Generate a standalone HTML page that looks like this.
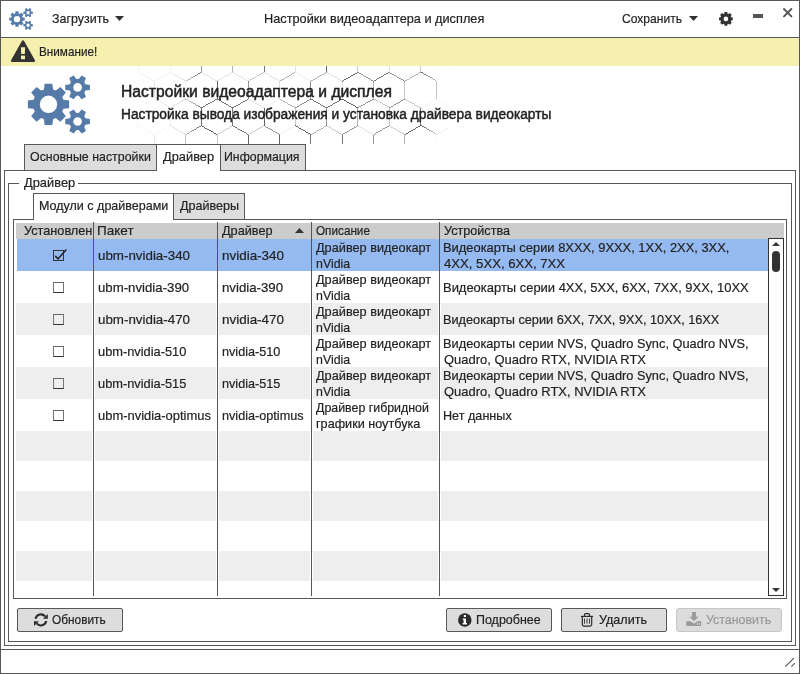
<!DOCTYPE html>
<html lang="ru"><head><meta charset="utf-8"><title>Настройки видеоадаптера и дисплея</title>
<style>
html,body{margin:0;padding:0;background:#fff;}
body{width:800px;height:674px;position:relative;overflow:hidden;font-family:"Liberation Sans", sans-serif;color:#222;}
.b{position:absolute;box-sizing:border-box;}
.t{position:absolute;white-space:nowrap;transform-origin:0 0;}
.ln{position:absolute;background:#585858;}
svg{position:absolute;overflow:visible;}
</style></head><body>
<div class="b" style="left:0;top:0;width:800px;height:674px;border:1px solid #585858;background:#fff"></div>
<div class="ln" style="left:1px;top:37px;width:798px;height:1px"></div>
<div class="b" style="left:1px;top:38px;width:798px;height:28px;background:#f5f0ae"></div>
<svg style="position:absolute;left:126px;top:66px" width="328" height="78" viewBox="0 0 328 78">
<defs><linearGradient id="hg" x1="0" x2="1" y1="0" y2="0">
<stop offset="0" stop-color="#fff" stop-opacity="0"/><stop offset="0.06" stop-color="#fff" stop-opacity="0.1"/><stop offset="0.17" stop-color="#fff" stop-opacity="0.22"/><stop offset="0.235" stop-color="#fff" stop-opacity="0.9"/>
<stop offset="0.9" stop-color="#fff" stop-opacity="0.9"/><stop offset="0.95" stop-color="#fff" stop-opacity="0.3"/><stop offset="1" stop-color="#fff" stop-opacity="0"/></linearGradient>
<mask id="hm"><rect x="0" y="0" width="328" height="78" fill="url(#hg)"/></mask></defs>
<g mask="url(#hm)" stroke="#1a1a1a" stroke-width="0.75" shape-rendering="crispEdges" fill="none">
<line x1="-112.4" y1="-47.1" x2="-96.8" y2="-38.2" stroke-opacity="0.7"/><line x1="-112.4" y1="-47.1" x2="-128.1" y2="-38.2" stroke-opacity="0.9"/><line x1="-96.8" y1="-38.2" x2="-96.8" y2="-20.4" stroke-opacity="0.5"/><line x1="-81.1" y1="-47.1" x2="-65.4" y2="-38.2" stroke-opacity="0.2"/><line x1="-81.1" y1="-47.1" x2="-96.8" y2="-38.2" stroke-opacity="1"/><line x1="-65.4" y1="-38.2" x2="-65.4" y2="-20.4" stroke-opacity="1"/><line x1="-49.8" y1="-47.1" x2="-34.2" y2="-38.2" stroke-opacity="0.1"/><line x1="-49.8" y1="-47.1" x2="-65.5" y2="-38.2" stroke-opacity="0.35"/><line x1="-34.2" y1="-38.2" x2="-34.2" y2="-20.4" stroke-opacity="1"/><line x1="-18.5" y1="-47.1" x2="-2.8" y2="-38.2" stroke-opacity="0.7"/><line x1="-18.5" y1="-47.1" x2="-34.2" y2="-38.2" stroke-opacity="0.35"/><line x1="-2.8" y1="-38.2" x2="-2.8" y2="-20.4" stroke-opacity="1"/><line x1="12.8" y1="-47.1" x2="28.5" y2="-38.2" stroke-opacity="0.35"/><line x1="12.8" y1="-47.1" x2="-2.8" y2="-38.2" stroke-opacity="0.9"/><line x1="28.5" y1="-38.2" x2="28.5" y2="-20.4" stroke-opacity="1"/><line x1="44.1" y1="-47.1" x2="59.8" y2="-38.2" stroke-opacity="1"/><line x1="44.1" y1="-47.1" x2="28.4" y2="-38.2" stroke-opacity="0.5"/><line x1="59.8" y1="-38.2" x2="59.8" y2="-20.4" stroke-opacity="0.5"/><line x1="75.4" y1="-47.1" x2="91.1" y2="-38.2" stroke-opacity="1"/><line x1="75.4" y1="-47.1" x2="59.8" y2="-38.2" stroke-opacity="0.9"/><line x1="91.1" y1="-38.2" x2="91.1" y2="-20.4" stroke-opacity="1"/><line x1="106.7" y1="-47.1" x2="122.3" y2="-38.2" stroke-opacity="0.35"/><line x1="106.7" y1="-47.1" x2="91.0" y2="-38.2" stroke-opacity="0.5"/><line x1="122.3" y1="-38.2" x2="122.3" y2="-20.4" stroke-opacity="1"/><line x1="138.0" y1="-47.1" x2="153.6" y2="-38.2" stroke-opacity="0.1"/><line x1="138.0" y1="-47.1" x2="122.3" y2="-38.2" stroke-opacity="0.35"/><line x1="153.6" y1="-38.2" x2="153.6" y2="-20.4" stroke-opacity="1"/><line x1="169.3" y1="-47.1" x2="184.9" y2="-38.2" stroke-opacity="0.9"/><line x1="169.3" y1="-47.1" x2="153.7" y2="-38.2" stroke-opacity="0.2"/><line x1="184.9" y1="-38.2" x2="184.9" y2="-20.4" stroke-opacity="0.2"/><line x1="200.6" y1="-47.1" x2="216.2" y2="-38.2" stroke-opacity="0.35"/><line x1="200.6" y1="-47.1" x2="185.0" y2="-38.2" stroke-opacity="1"/><line x1="216.2" y1="-38.2" x2="216.2" y2="-20.4" stroke-opacity="0.35"/><line x1="231.9" y1="-47.1" x2="247.5" y2="-38.2" stroke-opacity="0.35"/><line x1="231.9" y1="-47.1" x2="216.2" y2="-38.2" stroke-opacity="0.5"/><line x1="247.5" y1="-38.2" x2="247.5" y2="-20.4" stroke-opacity="1"/><line x1="263.2" y1="-47.1" x2="278.8" y2="-38.2" stroke-opacity="0.9"/><line x1="263.2" y1="-47.1" x2="247.6" y2="-38.2" stroke-opacity="1"/><line x1="278.8" y1="-38.2" x2="278.8" y2="-20.4" stroke-opacity="0.35"/><line x1="294.5" y1="-47.1" x2="310.1" y2="-38.2" stroke-opacity="0.1"/><line x1="294.5" y1="-47.1" x2="278.9" y2="-38.2" stroke-opacity="0.9"/><line x1="310.1" y1="-38.2" x2="310.1" y2="-20.4" stroke-opacity="0.7"/><line x1="325.8" y1="-47.1" x2="341.4" y2="-38.2" stroke-opacity="0.5"/><line x1="325.8" y1="-47.1" x2="310.2" y2="-38.2" stroke-opacity="0.9"/><line x1="341.4" y1="-38.2" x2="341.4" y2="-20.4" stroke-opacity="0.35"/><line x1="357.1" y1="-47.1" x2="372.8" y2="-38.2" stroke-opacity="1"/><line x1="357.1" y1="-47.1" x2="341.5" y2="-38.2" stroke-opacity="0.35"/><line x1="372.8" y1="-38.2" x2="372.8" y2="-20.4" stroke-opacity="0.7"/><line x1="388.4" y1="-47.1" x2="404.0" y2="-38.2" stroke-opacity="0.35"/><line x1="388.4" y1="-47.1" x2="372.8" y2="-38.2" stroke-opacity="0.1"/><line x1="404.0" y1="-38.2" x2="404.0" y2="-20.4" stroke-opacity="0.2"/><line x1="419.7" y1="-47.1" x2="435.4" y2="-38.2" stroke-opacity="0.9"/><line x1="419.7" y1="-47.1" x2="404.1" y2="-38.2" stroke-opacity="1"/><line x1="435.4" y1="-38.2" x2="435.4" y2="-20.4" stroke-opacity="0.35"/><line x1="-96.8" y1="-20.4" x2="-81.1" y2="-11.5" stroke-opacity="0.35"/><line x1="-96.8" y1="-20.4" x2="-112.4" y2="-11.5" stroke-opacity="0.2"/><line x1="-81.1" y1="-11.5" x2="-81.1" y2="6.3" stroke-opacity="0.9"/><line x1="-65.4" y1="-20.4" x2="-49.8" y2="-11.5" stroke-opacity="0.7"/><line x1="-65.4" y1="-20.4" x2="-81.1" y2="-11.5" stroke-opacity="1"/><line x1="-49.8" y1="-11.5" x2="-49.8" y2="6.3" stroke-opacity="0.35"/><line x1="-34.2" y1="-20.4" x2="-18.5" y2="-11.5" stroke-opacity="0.2"/><line x1="-34.2" y1="-20.4" x2="-49.8" y2="-11.5" stroke-opacity="1"/><line x1="-18.5" y1="-11.5" x2="-18.5" y2="6.3" stroke-opacity="0.35"/><line x1="-2.8" y1="-20.4" x2="12.8" y2="-11.5" stroke-opacity="1"/><line x1="-2.8" y1="-20.4" x2="-18.5" y2="-11.5" stroke-opacity="0.35"/><line x1="12.8" y1="-11.5" x2="12.8" y2="6.3" stroke-opacity="0.9"/><line x1="28.5" y1="-20.4" x2="44.1" y2="-11.5" stroke-opacity="0.5"/><line x1="28.5" y1="-20.4" x2="12.8" y2="-11.5" stroke-opacity="0.2"/><line x1="44.1" y1="-11.5" x2="44.1" y2="6.3" stroke-opacity="0.35"/><line x1="59.8" y1="-20.4" x2="75.4" y2="-11.5" stroke-opacity="0.5"/><line x1="59.8" y1="-20.4" x2="44.1" y2="-11.5" stroke-opacity="0.1"/><line x1="75.4" y1="-11.5" x2="75.4" y2="6.3" stroke-opacity="0.7"/><line x1="91.1" y1="-20.4" x2="106.7" y2="-11.5" stroke-opacity="0.5"/><line x1="91.1" y1="-20.4" x2="75.4" y2="-11.5" stroke-opacity="0.35"/><line x1="106.7" y1="-11.5" x2="106.7" y2="6.3" stroke-opacity="0.5"/><line x1="122.3" y1="-20.4" x2="138.0" y2="-11.5" stroke-opacity="0.7"/><line x1="122.3" y1="-20.4" x2="106.7" y2="-11.5" stroke-opacity="0.7"/><line x1="138.0" y1="-11.5" x2="138.0" y2="6.3" stroke-opacity="0.9"/><line x1="153.6" y1="-20.4" x2="169.3" y2="-11.5" stroke-opacity="0.1"/><line x1="153.6" y1="-20.4" x2="138.0" y2="-11.5" stroke-opacity="0.9"/><line x1="169.3" y1="-11.5" x2="169.3" y2="6.3" stroke-opacity="0.2"/><line x1="184.9" y1="-20.4" x2="200.6" y2="-11.5" stroke-opacity="0.1"/><line x1="184.9" y1="-20.4" x2="169.3" y2="-11.5" stroke-opacity="0.9"/><line x1="200.6" y1="-11.5" x2="200.6" y2="6.3" stroke-opacity="1"/><line x1="216.2" y1="-20.4" x2="231.9" y2="-11.5" stroke-opacity="0.35"/><line x1="216.2" y1="-20.4" x2="200.6" y2="-11.5" stroke-opacity="0.7"/><line x1="231.9" y1="-11.5" x2="231.9" y2="6.3" stroke-opacity="0.35"/><line x1="247.5" y1="-20.4" x2="263.2" y2="-11.5" stroke-opacity="0.5"/><line x1="247.5" y1="-20.4" x2="231.9" y2="-11.5" stroke-opacity="0.7"/><line x1="263.2" y1="-11.5" x2="263.2" y2="6.3" stroke-opacity="0.2"/><line x1="278.8" y1="-20.4" x2="294.5" y2="-11.5" stroke-opacity="0.5"/><line x1="278.8" y1="-20.4" x2="263.2" y2="-11.5" stroke-opacity="0.7"/><line x1="294.5" y1="-11.5" x2="294.5" y2="6.3" stroke-opacity="0.35"/><line x1="310.1" y1="-20.4" x2="325.8" y2="-11.5" stroke-opacity="1"/><line x1="310.1" y1="-20.4" x2="294.5" y2="-11.5" stroke-opacity="1"/><line x1="325.8" y1="-11.5" x2="325.8" y2="6.3" stroke-opacity="0.35"/><line x1="341.4" y1="-20.4" x2="357.1" y2="-11.5" stroke-opacity="0.5"/><line x1="341.4" y1="-20.4" x2="325.8" y2="-11.5" stroke-opacity="0.9"/><line x1="357.1" y1="-11.5" x2="357.1" y2="6.3" stroke-opacity="0.1"/><line x1="372.8" y1="-20.4" x2="388.4" y2="-11.5" stroke-opacity="0.7"/><line x1="372.8" y1="-20.4" x2="357.1" y2="-11.5" stroke-opacity="0.9"/><line x1="388.4" y1="-11.5" x2="388.4" y2="6.3" stroke-opacity="0.5"/><line x1="404.0" y1="-20.4" x2="419.7" y2="-11.5" stroke-opacity="0.5"/><line x1="404.0" y1="-20.4" x2="388.4" y2="-11.5" stroke-opacity="1"/><line x1="419.7" y1="-11.5" x2="419.7" y2="6.3" stroke-opacity="0.2"/><line x1="435.4" y1="-20.4" x2="451.0" y2="-11.5" stroke-opacity="1"/><line x1="435.4" y1="-20.4" x2="419.7" y2="-11.5" stroke-opacity="0.1"/><line x1="451.0" y1="-11.5" x2="451.0" y2="6.3" stroke-opacity="0.35"/><line x1="-112.4" y1="6.3" x2="-96.8" y2="15.2" stroke-opacity="0.35"/><line x1="-112.4" y1="6.3" x2="-128.1" y2="15.2" stroke-opacity="0.1"/><line x1="-96.8" y1="15.2" x2="-96.8" y2="33.0" stroke-opacity="0.1"/><line x1="-81.1" y1="6.3" x2="-65.4" y2="15.2" stroke-opacity="0.7"/><line x1="-81.1" y1="6.3" x2="-96.8" y2="15.2" stroke-opacity="0.7"/><line x1="-65.4" y1="15.2" x2="-65.4" y2="33.0" stroke-opacity="0.2"/><line x1="-49.8" y1="6.3" x2="-34.2" y2="15.2" stroke-opacity="0.7"/><line x1="-49.8" y1="6.3" x2="-65.5" y2="15.2" stroke-opacity="0.35"/><line x1="-34.2" y1="15.2" x2="-34.2" y2="33.0" stroke-opacity="0.5"/><line x1="-18.5" y1="6.3" x2="-2.8" y2="15.2" stroke-opacity="0.35"/><line x1="-18.5" y1="6.3" x2="-34.2" y2="15.2" stroke-opacity="0.1"/><line x1="-2.8" y1="15.2" x2="-2.8" y2="33.0" stroke-opacity="0.5"/><line x1="12.8" y1="6.3" x2="28.5" y2="15.2" stroke-opacity="1"/><line x1="12.8" y1="6.3" x2="-2.8" y2="15.2" stroke-opacity="0.1"/><line x1="28.5" y1="15.2" x2="28.5" y2="33.0" stroke-opacity="1"/><line x1="44.1" y1="6.3" x2="59.8" y2="15.2" stroke-opacity="0.7"/><line x1="44.1" y1="6.3" x2="28.4" y2="15.2" stroke-opacity="0.5"/><line x1="59.8" y1="15.2" x2="59.8" y2="33.0" stroke-opacity="0.2"/><line x1="75.4" y1="6.3" x2="91.1" y2="15.2" stroke-opacity="0.2"/><line x1="75.4" y1="6.3" x2="59.8" y2="15.2" stroke-opacity="1"/><line x1="91.1" y1="15.2" x2="91.1" y2="33.0" stroke-opacity="1"/><line x1="106.7" y1="6.3" x2="122.3" y2="15.2" stroke-opacity="0.2"/><line x1="106.7" y1="6.3" x2="91.0" y2="15.2" stroke-opacity="0.2"/><line x1="122.3" y1="15.2" x2="122.3" y2="33.0" stroke-opacity="0.7"/><line x1="138.0" y1="6.3" x2="153.6" y2="15.2" stroke-opacity="0.2"/><line x1="138.0" y1="6.3" x2="122.3" y2="15.2" stroke-opacity="0.35"/><line x1="153.6" y1="15.2" x2="153.6" y2="33.0" stroke-opacity="0.2"/><line x1="169.3" y1="6.3" x2="184.9" y2="15.2" stroke-opacity="0.1"/><line x1="169.3" y1="6.3" x2="153.7" y2="15.2" stroke-opacity="0.5"/><line x1="184.9" y1="15.2" x2="184.9" y2="33.0" stroke-opacity="0.7"/><line x1="200.6" y1="6.3" x2="216.2" y2="15.2" stroke-opacity="0.2"/><line x1="200.6" y1="6.3" x2="185.0" y2="15.2" stroke-opacity="0.5"/><line x1="216.2" y1="15.2" x2="216.2" y2="33.0" stroke-opacity="0.2"/><line x1="231.9" y1="6.3" x2="247.5" y2="15.2" stroke-opacity="0.7"/><line x1="231.9" y1="6.3" x2="216.2" y2="15.2" stroke-opacity="1"/><line x1="247.5" y1="15.2" x2="247.5" y2="33.0" stroke-opacity="0.5"/><line x1="263.2" y1="6.3" x2="278.8" y2="15.2" stroke-opacity="0.7"/><line x1="263.2" y1="6.3" x2="247.6" y2="15.2" stroke-opacity="0.9"/><line x1="278.8" y1="15.2" x2="278.8" y2="33.0" stroke-opacity="0.35"/><line x1="294.5" y1="6.3" x2="310.1" y2="15.2" stroke-opacity="1"/><line x1="294.5" y1="6.3" x2="278.9" y2="15.2" stroke-opacity="0.5"/><line x1="310.1" y1="15.2" x2="310.1" y2="33.0" stroke-opacity="1"/><line x1="325.8" y1="6.3" x2="341.4" y2="15.2" stroke-opacity="0.9"/><line x1="325.8" y1="6.3" x2="310.2" y2="15.2" stroke-opacity="0.1"/><line x1="341.4" y1="15.2" x2="341.4" y2="33.0" stroke-opacity="0.7"/><line x1="357.1" y1="6.3" x2="372.8" y2="15.2" stroke-opacity="0.9"/><line x1="357.1" y1="6.3" x2="341.5" y2="15.2" stroke-opacity="0.2"/><line x1="372.8" y1="15.2" x2="372.8" y2="33.0" stroke-opacity="0.9"/><line x1="388.4" y1="6.3" x2="404.0" y2="15.2" stroke-opacity="0.5"/><line x1="388.4" y1="6.3" x2="372.8" y2="15.2" stroke-opacity="0.5"/><line x1="404.0" y1="15.2" x2="404.0" y2="33.0" stroke-opacity="0.1"/><line x1="419.7" y1="6.3" x2="435.4" y2="15.2" stroke-opacity="0.5"/><line x1="419.7" y1="6.3" x2="404.1" y2="15.2" stroke-opacity="1"/><line x1="435.4" y1="15.2" x2="435.4" y2="33.0" stroke-opacity="0.9"/><line x1="-96.8" y1="33.0" x2="-81.1" y2="41.9" stroke-opacity="0.5"/><line x1="-96.8" y1="33.0" x2="-112.4" y2="41.9" stroke-opacity="0.5"/><line x1="-81.1" y1="41.9" x2="-81.1" y2="59.7" stroke-opacity="0.35"/><line x1="-65.4" y1="33.0" x2="-49.8" y2="41.9" stroke-opacity="0.7"/><line x1="-65.4" y1="33.0" x2="-81.1" y2="41.9" stroke-opacity="0.9"/><line x1="-49.8" y1="41.9" x2="-49.8" y2="59.7" stroke-opacity="0.1"/><line x1="-34.2" y1="33.0" x2="-18.5" y2="41.9" stroke-opacity="0.5"/><line x1="-34.2" y1="33.0" x2="-49.8" y2="41.9" stroke-opacity="0.1"/><line x1="-18.5" y1="41.9" x2="-18.5" y2="59.7" stroke-opacity="0.35"/><line x1="-2.8" y1="33.0" x2="12.8" y2="41.9" stroke-opacity="0.7"/><line x1="-2.8" y1="33.0" x2="-18.5" y2="41.9" stroke-opacity="0.2"/><line x1="12.8" y1="41.9" x2="12.8" y2="59.7" stroke-opacity="0.5"/><line x1="28.5" y1="33.0" x2="44.1" y2="41.9" stroke-opacity="0.7"/><line x1="28.5" y1="33.0" x2="12.8" y2="41.9" stroke-opacity="0.2"/><line x1="44.1" y1="41.9" x2="44.1" y2="59.7" stroke-opacity="0.5"/><line x1="59.8" y1="33.0" x2="75.4" y2="41.9" stroke-opacity="0.9"/><line x1="59.8" y1="33.0" x2="44.1" y2="41.9" stroke-opacity="0.9"/><line x1="75.4" y1="41.9" x2="75.4" y2="59.7" stroke-opacity="1"/><line x1="91.1" y1="33.0" x2="106.7" y2="41.9" stroke-opacity="0.9"/><line x1="91.1" y1="33.0" x2="75.4" y2="41.9" stroke-opacity="0.9"/><line x1="106.7" y1="41.9" x2="106.7" y2="59.7" stroke-opacity="0.9"/><line x1="122.3" y1="33.0" x2="138.0" y2="41.9" stroke-opacity="0.2"/><line x1="122.3" y1="33.0" x2="106.7" y2="41.9" stroke-opacity="0.9"/><line x1="138.0" y1="41.9" x2="138.0" y2="59.7" stroke-opacity="1"/><line x1="153.6" y1="33.0" x2="169.3" y2="41.9" stroke-opacity="0.5"/><line x1="153.6" y1="33.0" x2="138.0" y2="41.9" stroke-opacity="0.1"/><line x1="169.3" y1="41.9" x2="169.3" y2="59.7" stroke-opacity="0.35"/><line x1="184.9" y1="33.0" x2="200.6" y2="41.9" stroke-opacity="0.9"/><line x1="184.9" y1="33.0" x2="169.3" y2="41.9" stroke-opacity="0.7"/><line x1="200.6" y1="41.9" x2="200.6" y2="59.7" stroke-opacity="0.7"/><line x1="216.2" y1="33.0" x2="231.9" y2="41.9" stroke-opacity="1"/><line x1="216.2" y1="33.0" x2="200.6" y2="41.9" stroke-opacity="0.9"/><line x1="231.9" y1="41.9" x2="231.9" y2="59.7" stroke-opacity="0.5"/><line x1="247.5" y1="33.0" x2="263.2" y2="41.9" stroke-opacity="0.35"/><line x1="247.5" y1="33.0" x2="231.9" y2="41.9" stroke-opacity="0.7"/><line x1="263.2" y1="41.9" x2="263.2" y2="59.7" stroke-opacity="0.35"/><line x1="278.8" y1="33.0" x2="294.5" y2="41.9" stroke-opacity="0.35"/><line x1="278.8" y1="33.0" x2="263.2" y2="41.9" stroke-opacity="0.7"/><line x1="294.5" y1="41.9" x2="294.5" y2="59.7" stroke-opacity="0.9"/><line x1="310.1" y1="33.0" x2="325.8" y2="41.9" stroke-opacity="0.2"/><line x1="310.1" y1="33.0" x2="294.5" y2="41.9" stroke-opacity="0.1"/><line x1="325.8" y1="41.9" x2="325.8" y2="59.7" stroke-opacity="0.35"/><line x1="341.4" y1="33.0" x2="357.1" y2="41.9" stroke-opacity="0.35"/><line x1="341.4" y1="33.0" x2="325.8" y2="41.9" stroke-opacity="0.2"/><line x1="357.1" y1="41.9" x2="357.1" y2="59.7" stroke-opacity="0.2"/><line x1="372.8" y1="33.0" x2="388.4" y2="41.9" stroke-opacity="0.2"/><line x1="372.8" y1="33.0" x2="357.1" y2="41.9" stroke-opacity="1"/><line x1="388.4" y1="41.9" x2="388.4" y2="59.7" stroke-opacity="0.5"/><line x1="404.0" y1="33.0" x2="419.7" y2="41.9" stroke-opacity="0.1"/><line x1="404.0" y1="33.0" x2="388.4" y2="41.9" stroke-opacity="0.1"/><line x1="419.7" y1="41.9" x2="419.7" y2="59.7" stroke-opacity="0.1"/><line x1="435.4" y1="33.0" x2="451.0" y2="41.9" stroke-opacity="0.2"/><line x1="435.4" y1="33.0" x2="419.7" y2="41.9" stroke-opacity="0.1"/><line x1="451.0" y1="41.9" x2="451.0" y2="59.7" stroke-opacity="0.35"/><line x1="-112.4" y1="59.7" x2="-96.8" y2="68.6" stroke-opacity="0.5"/><line x1="-112.4" y1="59.7" x2="-128.1" y2="68.6" stroke-opacity="0.5"/><line x1="-96.8" y1="68.6" x2="-96.8" y2="86.4" stroke-opacity="0.5"/><line x1="-81.1" y1="59.7" x2="-65.4" y2="68.6" stroke-opacity="0.5"/><line x1="-81.1" y1="59.7" x2="-96.8" y2="68.6" stroke-opacity="1"/><line x1="-65.4" y1="68.6" x2="-65.4" y2="86.4" stroke-opacity="0.5"/><line x1="-49.8" y1="59.7" x2="-34.2" y2="68.6" stroke-opacity="0.2"/><line x1="-49.8" y1="59.7" x2="-65.5" y2="68.6" stroke-opacity="0.5"/><line x1="-34.2" y1="68.6" x2="-34.2" y2="86.4" stroke-opacity="1"/><line x1="-18.5" y1="59.7" x2="-2.8" y2="68.6" stroke-opacity="0.9"/><line x1="-18.5" y1="59.7" x2="-34.2" y2="68.6" stroke-opacity="1"/><line x1="-2.8" y1="68.6" x2="-2.8" y2="86.4" stroke-opacity="0.9"/><line x1="12.8" y1="59.7" x2="28.5" y2="68.6" stroke-opacity="0.5"/><line x1="12.8" y1="59.7" x2="-2.8" y2="68.6" stroke-opacity="0.9"/><line x1="28.5" y1="68.6" x2="28.5" y2="86.4" stroke-opacity="1"/><line x1="44.1" y1="59.7" x2="59.8" y2="68.6" stroke-opacity="0.7"/><line x1="44.1" y1="59.7" x2="28.4" y2="68.6" stroke-opacity="0.35"/><line x1="59.8" y1="68.6" x2="59.8" y2="86.4" stroke-opacity="1"/><line x1="75.4" y1="59.7" x2="91.1" y2="68.6" stroke-opacity="1"/><line x1="75.4" y1="59.7" x2="59.8" y2="68.6" stroke-opacity="1"/><line x1="91.1" y1="68.6" x2="91.1" y2="86.4" stroke-opacity="0.35"/><line x1="106.7" y1="59.7" x2="122.3" y2="68.6" stroke-opacity="0.9"/><line x1="106.7" y1="59.7" x2="91.0" y2="68.6" stroke-opacity="0.35"/><line x1="122.3" y1="68.6" x2="122.3" y2="86.4" stroke-opacity="1"/><line x1="138.0" y1="59.7" x2="153.6" y2="68.6" stroke-opacity="0.7"/><line x1="138.0" y1="59.7" x2="122.3" y2="68.6" stroke-opacity="0.35"/><line x1="153.6" y1="68.6" x2="153.6" y2="86.4" stroke-opacity="1"/><line x1="169.3" y1="59.7" x2="184.9" y2="68.6" stroke-opacity="1"/><line x1="169.3" y1="59.7" x2="153.7" y2="68.6" stroke-opacity="0.1"/><line x1="184.9" y1="68.6" x2="184.9" y2="86.4" stroke-opacity="0.9"/><line x1="200.6" y1="59.7" x2="216.2" y2="68.6" stroke-opacity="0.35"/><line x1="200.6" y1="59.7" x2="185.0" y2="68.6" stroke-opacity="0.5"/><line x1="216.2" y1="68.6" x2="216.2" y2="86.4" stroke-opacity="0.9"/><line x1="231.9" y1="59.7" x2="247.5" y2="68.6" stroke-opacity="0.2"/><line x1="231.9" y1="59.7" x2="216.2" y2="68.6" stroke-opacity="0.7"/><line x1="247.5" y1="68.6" x2="247.5" y2="86.4" stroke-opacity="0.7"/><line x1="263.2" y1="59.7" x2="278.8" y2="68.6" stroke-opacity="0.35"/><line x1="263.2" y1="59.7" x2="247.6" y2="68.6" stroke-opacity="0.7"/><line x1="278.8" y1="68.6" x2="278.8" y2="86.4" stroke-opacity="0.5"/><line x1="294.5" y1="59.7" x2="310.1" y2="68.6" stroke-opacity="1"/><line x1="294.5" y1="59.7" x2="278.9" y2="68.6" stroke-opacity="1"/><line x1="310.1" y1="68.6" x2="310.1" y2="86.4" stroke-opacity="0.1"/><line x1="325.8" y1="59.7" x2="341.4" y2="68.6" stroke-opacity="0.5"/><line x1="325.8" y1="59.7" x2="310.2" y2="68.6" stroke-opacity="0.5"/><line x1="341.4" y1="68.6" x2="341.4" y2="86.4" stroke-opacity="0.5"/><line x1="357.1" y1="59.7" x2="372.8" y2="68.6" stroke-opacity="0.5"/><line x1="357.1" y1="59.7" x2="341.5" y2="68.6" stroke-opacity="0.7"/><line x1="372.8" y1="68.6" x2="372.8" y2="86.4" stroke-opacity="1"/><line x1="388.4" y1="59.7" x2="404.0" y2="68.6" stroke-opacity="0.9"/><line x1="388.4" y1="59.7" x2="372.8" y2="68.6" stroke-opacity="1"/><line x1="404.0" y1="68.6" x2="404.0" y2="86.4" stroke-opacity="0.2"/><line x1="419.7" y1="59.7" x2="435.4" y2="68.6" stroke-opacity="0.7"/><line x1="419.7" y1="59.7" x2="404.1" y2="68.6" stroke-opacity="0.2"/><line x1="435.4" y1="68.6" x2="435.4" y2="86.4" stroke-opacity="0.7"/><line x1="-96.8" y1="86.4" x2="-81.1" y2="95.3" stroke-opacity="0.5"/><line x1="-96.8" y1="86.4" x2="-112.4" y2="95.3" stroke-opacity="0.1"/><line x1="-81.1" y1="95.3" x2="-81.1" y2="113.1" stroke-opacity="0.2"/><line x1="-65.4" y1="86.4" x2="-49.8" y2="95.3" stroke-opacity="0.9"/><line x1="-65.4" y1="86.4" x2="-81.1" y2="95.3" stroke-opacity="0.35"/><line x1="-49.8" y1="95.3" x2="-49.8" y2="113.1" stroke-opacity="1"/><line x1="-34.2" y1="86.4" x2="-18.5" y2="95.3" stroke-opacity="0.9"/><line x1="-34.2" y1="86.4" x2="-49.8" y2="95.3" stroke-opacity="0.35"/><line x1="-18.5" y1="95.3" x2="-18.5" y2="113.1" stroke-opacity="0.7"/><line x1="-2.8" y1="86.4" x2="12.8" y2="95.3" stroke-opacity="0.9"/><line x1="-2.8" y1="86.4" x2="-18.5" y2="95.3" stroke-opacity="0.2"/><line x1="12.8" y1="95.3" x2="12.8" y2="113.1" stroke-opacity="0.35"/><line x1="28.5" y1="86.4" x2="44.1" y2="95.3" stroke-opacity="1"/><line x1="28.5" y1="86.4" x2="12.8" y2="95.3" stroke-opacity="0.1"/><line x1="44.1" y1="95.3" x2="44.1" y2="113.1" stroke-opacity="0.35"/><line x1="59.8" y1="86.4" x2="75.4" y2="95.3" stroke-opacity="0.7"/><line x1="59.8" y1="86.4" x2="44.1" y2="95.3" stroke-opacity="0.2"/><line x1="75.4" y1="95.3" x2="75.4" y2="113.1" stroke-opacity="0.1"/><line x1="91.1" y1="86.4" x2="106.7" y2="95.3" stroke-opacity="1"/><line x1="91.1" y1="86.4" x2="75.4" y2="95.3" stroke-opacity="0.2"/><line x1="106.7" y1="95.3" x2="106.7" y2="113.1" stroke-opacity="0.1"/><line x1="122.3" y1="86.4" x2="138.0" y2="95.3" stroke-opacity="0.7"/><line x1="122.3" y1="86.4" x2="106.7" y2="95.3" stroke-opacity="0.35"/><line x1="138.0" y1="95.3" x2="138.0" y2="113.1" stroke-opacity="0.7"/><line x1="153.6" y1="86.4" x2="169.3" y2="95.3" stroke-opacity="0.9"/><line x1="153.6" y1="86.4" x2="138.0" y2="95.3" stroke-opacity="0.7"/><line x1="169.3" y1="95.3" x2="169.3" y2="113.1" stroke-opacity="0.1"/><line x1="184.9" y1="86.4" x2="200.6" y2="95.3" stroke-opacity="0.9"/><line x1="184.9" y1="86.4" x2="169.3" y2="95.3" stroke-opacity="0.35"/><line x1="200.6" y1="95.3" x2="200.6" y2="113.1" stroke-opacity="0.35"/><line x1="216.2" y1="86.4" x2="231.9" y2="95.3" stroke-opacity="0.1"/><line x1="216.2" y1="86.4" x2="200.6" y2="95.3" stroke-opacity="0.35"/><line x1="231.9" y1="95.3" x2="231.9" y2="113.1" stroke-opacity="0.7"/><line x1="247.5" y1="86.4" x2="263.2" y2="95.3" stroke-opacity="0.2"/><line x1="247.5" y1="86.4" x2="231.9" y2="95.3" stroke-opacity="0.9"/><line x1="263.2" y1="95.3" x2="263.2" y2="113.1" stroke-opacity="0.35"/><line x1="278.8" y1="86.4" x2="294.5" y2="95.3" stroke-opacity="0.1"/><line x1="278.8" y1="86.4" x2="263.2" y2="95.3" stroke-opacity="0.1"/><line x1="294.5" y1="95.3" x2="294.5" y2="113.1" stroke-opacity="0.1"/><line x1="310.1" y1="86.4" x2="325.8" y2="95.3" stroke-opacity="0.1"/><line x1="310.1" y1="86.4" x2="294.5" y2="95.3" stroke-opacity="0.9"/><line x1="325.8" y1="95.3" x2="325.8" y2="113.1" stroke-opacity="0.1"/><line x1="341.4" y1="86.4" x2="357.1" y2="95.3" stroke-opacity="0.9"/><line x1="341.4" y1="86.4" x2="325.8" y2="95.3" stroke-opacity="0.1"/><line x1="357.1" y1="95.3" x2="357.1" y2="113.1" stroke-opacity="0.5"/><line x1="372.8" y1="86.4" x2="388.4" y2="95.3" stroke-opacity="0.2"/><line x1="372.8" y1="86.4" x2="357.1" y2="95.3" stroke-opacity="0.1"/><line x1="388.4" y1="95.3" x2="388.4" y2="113.1" stroke-opacity="0.9"/><line x1="404.0" y1="86.4" x2="419.7" y2="95.3" stroke-opacity="0.9"/><line x1="404.0" y1="86.4" x2="388.4" y2="95.3" stroke-opacity="0.35"/><line x1="419.7" y1="95.3" x2="419.7" y2="113.1" stroke-opacity="0.5"/><line x1="435.4" y1="86.4" x2="451.0" y2="95.3" stroke-opacity="0.7"/><line x1="435.4" y1="86.4" x2="419.7" y2="95.3" stroke-opacity="0.2"/><line x1="451.0" y1="95.3" x2="451.0" y2="113.1" stroke-opacity="1"/><line x1="-112.4" y1="113.1" x2="-96.8" y2="122.0" stroke-opacity="1"/><line x1="-112.4" y1="113.1" x2="-128.1" y2="122.0" stroke-opacity="0.1"/><line x1="-96.8" y1="122.0" x2="-96.8" y2="139.8" stroke-opacity="0.7"/><line x1="-81.1" y1="113.1" x2="-65.4" y2="122.0" stroke-opacity="0.5"/><line x1="-81.1" y1="113.1" x2="-96.8" y2="122.0" stroke-opacity="0.7"/><line x1="-65.4" y1="122.0" x2="-65.4" y2="139.8" stroke-opacity="0.9"/><line x1="-49.8" y1="113.1" x2="-34.2" y2="122.0" stroke-opacity="0.2"/><line x1="-49.8" y1="113.1" x2="-65.5" y2="122.0" stroke-opacity="0.35"/><line x1="-34.2" y1="122.0" x2="-34.2" y2="139.8" stroke-opacity="0.7"/><line x1="-18.5" y1="113.1" x2="-2.8" y2="122.0" stroke-opacity="0.5"/><line x1="-18.5" y1="113.1" x2="-34.2" y2="122.0" stroke-opacity="0.1"/><line x1="-2.8" y1="122.0" x2="-2.8" y2="139.8" stroke-opacity="0.2"/><line x1="12.8" y1="113.1" x2="28.5" y2="122.0" stroke-opacity="0.7"/><line x1="12.8" y1="113.1" x2="-2.8" y2="122.0" stroke-opacity="0.7"/><line x1="28.5" y1="122.0" x2="28.5" y2="139.8" stroke-opacity="1"/><line x1="44.1" y1="113.1" x2="59.8" y2="122.0" stroke-opacity="0.9"/><line x1="44.1" y1="113.1" x2="28.4" y2="122.0" stroke-opacity="1"/><line x1="59.8" y1="122.0" x2="59.8" y2="139.8" stroke-opacity="0.9"/><line x1="75.4" y1="113.1" x2="91.1" y2="122.0" stroke-opacity="0.5"/><line x1="75.4" y1="113.1" x2="59.8" y2="122.0" stroke-opacity="0.9"/><line x1="91.1" y1="122.0" x2="91.1" y2="139.8" stroke-opacity="0.7"/><line x1="106.7" y1="113.1" x2="122.3" y2="122.0" stroke-opacity="0.9"/><line x1="106.7" y1="113.1" x2="91.0" y2="122.0" stroke-opacity="0.5"/><line x1="122.3" y1="122.0" x2="122.3" y2="139.8" stroke-opacity="0.35"/><line x1="138.0" y1="113.1" x2="153.6" y2="122.0" stroke-opacity="0.35"/><line x1="138.0" y1="113.1" x2="122.3" y2="122.0" stroke-opacity="0.1"/><line x1="153.6" y1="122.0" x2="153.6" y2="139.8" stroke-opacity="1"/><line x1="169.3" y1="113.1" x2="184.9" y2="122.0" stroke-opacity="0.5"/><line x1="169.3" y1="113.1" x2="153.7" y2="122.0" stroke-opacity="0.2"/><line x1="184.9" y1="122.0" x2="184.9" y2="139.8" stroke-opacity="0.7"/><line x1="200.6" y1="113.1" x2="216.2" y2="122.0" stroke-opacity="0.1"/><line x1="200.6" y1="113.1" x2="185.0" y2="122.0" stroke-opacity="0.2"/><line x1="216.2" y1="122.0" x2="216.2" y2="139.8" stroke-opacity="1"/><line x1="231.9" y1="113.1" x2="247.5" y2="122.0" stroke-opacity="0.1"/><line x1="231.9" y1="113.1" x2="216.2" y2="122.0" stroke-opacity="0.2"/><line x1="247.5" y1="122.0" x2="247.5" y2="139.8" stroke-opacity="1"/><line x1="263.2" y1="113.1" x2="278.8" y2="122.0" stroke-opacity="0.5"/><line x1="263.2" y1="113.1" x2="247.6" y2="122.0" stroke-opacity="0.1"/><line x1="278.8" y1="122.0" x2="278.8" y2="139.8" stroke-opacity="0.2"/><line x1="294.5" y1="113.1" x2="310.1" y2="122.0" stroke-opacity="0.1"/><line x1="294.5" y1="113.1" x2="278.9" y2="122.0" stroke-opacity="0.9"/><line x1="310.1" y1="122.0" x2="310.1" y2="139.8" stroke-opacity="0.5"/><line x1="325.8" y1="113.1" x2="341.4" y2="122.0" stroke-opacity="0.9"/><line x1="325.8" y1="113.1" x2="310.2" y2="122.0" stroke-opacity="0.5"/><line x1="341.4" y1="122.0" x2="341.4" y2="139.8" stroke-opacity="0.1"/><line x1="357.1" y1="113.1" x2="372.8" y2="122.0" stroke-opacity="0.2"/><line x1="357.1" y1="113.1" x2="341.5" y2="122.0" stroke-opacity="0.7"/><line x1="372.8" y1="122.0" x2="372.8" y2="139.8" stroke-opacity="1"/><line x1="388.4" y1="113.1" x2="404.0" y2="122.0" stroke-opacity="0.1"/><line x1="388.4" y1="113.1" x2="372.8" y2="122.0" stroke-opacity="0.2"/><line x1="404.0" y1="122.0" x2="404.0" y2="139.8" stroke-opacity="0.5"/><line x1="419.7" y1="113.1" x2="435.4" y2="122.0" stroke-opacity="0.5"/><line x1="419.7" y1="113.1" x2="404.1" y2="122.0" stroke-opacity="0.5"/><line x1="435.4" y1="122.0" x2="435.4" y2="139.8" stroke-opacity="0.2"/>
</g></svg>
<div class="b" style="left:4px;top:170px;width:792px;height:476px;border:1px solid #585858;background:#fff"></div>
<div class="b" style="left:24px;top:144px;width:133px;height:27px;border:1px solid #585858;background:#ddd"></div>
<div class="b" style="left:220px;top:144px;width:86px;height:27px;border:1px solid #585858;background:#ddd"></div>
<div class="b" style="left:156px;top:144px;width:65px;height:27px;border:1px solid #585858;border-bottom:none;background:#fff"></div>
<div class="b" style="left:8px;top:183px;width:784px;height:459px;border:1px solid #585858"></div>
<div class="b" style="left:19px;top:181px;width:59px;height:5px;background:#fff"></div>
<div class="b" style="left:13px;top:219px;width:774px;height:380px;border:1px solid #585858;background:#fff"></div>
<div class="b" style="left:173px;top:193px;width:72px;height:27px;border:1px solid #585858;background:#ddd"></div>
<div class="b" style="left:33px;top:193px;width:141px;height:27px;border:1px solid #585858;border-bottom:none;background:#fff"></div>
<div class="b" style="left:16px;top:223px;width:768px;height:16px;background:#ccc"></div>
<div class="b" style="left:17px;top:239px;width:751px;height:32px;background:#94baf1"></div>
<div class="b" style="left:16px;top:303px;width:752px;height:32px;background:#eee"></div>
<div class="b" style="left:16px;top:367px;width:752px;height:32px;background:#eee"></div>
<div class="b" style="left:16px;top:431px;width:752px;height:30px;background:#eee"></div>
<div class="b" style="left:16px;top:491px;width:752px;height:30px;background:#eee"></div>
<div class="b" style="left:16px;top:551px;width:752px;height:30px;background:#eee"></div>
<div class="b" style="left:92px;top:303px;width:3px;height:32px;background:#fff"></div>
<div class="b" style="left:92px;top:367px;width:3px;height:32px;background:#fff"></div>
<div class="b" style="left:92px;top:431px;width:3px;height:30px;background:#fff"></div>
<div class="b" style="left:92px;top:491px;width:3px;height:30px;background:#fff"></div>
<div class="b" style="left:92px;top:551px;width:3px;height:30px;background:#fff"></div>
<div class="ln" style="left:93px;top:222px;width:1px;height:374px;background:#555"></div>
<div class="b" style="left:216px;top:303px;width:3px;height:32px;background:#fff"></div>
<div class="b" style="left:216px;top:367px;width:3px;height:32px;background:#fff"></div>
<div class="b" style="left:216px;top:431px;width:3px;height:30px;background:#fff"></div>
<div class="b" style="left:216px;top:491px;width:3px;height:30px;background:#fff"></div>
<div class="b" style="left:216px;top:551px;width:3px;height:30px;background:#fff"></div>
<div class="ln" style="left:217px;top:222px;width:1px;height:374px;background:#555"></div>
<div class="b" style="left:310px;top:303px;width:3px;height:32px;background:#fff"></div>
<div class="b" style="left:310px;top:367px;width:3px;height:32px;background:#fff"></div>
<div class="b" style="left:310px;top:431px;width:3px;height:30px;background:#fff"></div>
<div class="b" style="left:310px;top:491px;width:3px;height:30px;background:#fff"></div>
<div class="b" style="left:310px;top:551px;width:3px;height:30px;background:#fff"></div>
<div class="ln" style="left:311px;top:222px;width:1px;height:374px;background:#555"></div>
<div class="b" style="left:438px;top:303px;width:3px;height:32px;background:#fff"></div>
<div class="b" style="left:438px;top:367px;width:3px;height:32px;background:#fff"></div>
<div class="b" style="left:438px;top:431px;width:3px;height:30px;background:#fff"></div>
<div class="b" style="left:438px;top:491px;width:3px;height:30px;background:#fff"></div>
<div class="b" style="left:438px;top:551px;width:3px;height:30px;background:#fff"></div>
<div class="ln" style="left:439px;top:222px;width:1px;height:374px;background:#555"></div>
<svg style="left:295px;top:228px" width="9" height="5" viewBox="0 0 9 5"><path d="M0,5 L4.5,0 L9,5Z" fill="#333"/></svg>
<div class="b" style="left:53px;top:250px;width:11px;height:11px;border:1px solid #333"></div>
<svg style="left:53px;top:247px" width="15" height="14" viewBox="53 247 15 14"><path d="M55.6,256.4 L58.1,258.9 L65.9,249.9" fill="none" stroke="#222" stroke-width="1.5" stroke-linecap="round"/></svg>
<div class="b" style="left:53px;top:282px;width:11px;height:11px;border:1px solid;border-color:#666 #777 #333 #777"></div>
<div class="b" style="left:53px;top:314px;width:11px;height:11px;border:1px solid;border-color:#666 #777 #333 #777"></div>
<div class="b" style="left:53px;top:346px;width:11px;height:11px;border:1px solid;border-color:#666 #777 #333 #777"></div>
<div class="b" style="left:53px;top:378px;width:11px;height:11px;border:1px solid;border-color:#666 #777 #333 #777"></div>
<div class="b" style="left:53px;top:410px;width:11px;height:11px;border:1px solid;border-color:#666 #777 #333 #777"></div>
<div class="b" style="left:768px;top:238px;width:16px;height:358px;border:1px solid #333;background:#fff"></div>
<svg style="left:772px;top:242px" width="8" height="4" viewBox="0 0 8 4"><path d="M0,4 L4,0 L8,4Z" fill="#333"/></svg>
<div class="b" style="left:772px;top:251px;width:8px;height:21px;border-radius:4px;background:#333"></div>
<svg style="left:772px;top:588px" width="8" height="4" viewBox="0 0 8 4"><path d="M0,0 L4,4 L8,0Z" fill="#333"/></svg>
<div class="b" style="left:17px;top:608px;width:106px;height:24px;border:1px solid #585858;border-radius:2px;background:#ddd"></div>
<div class="b" style="left:446px;top:608px;width:106px;height:24px;border:1px solid #585858;border-radius:2px;background:#ddd"></div>
<div class="b" style="left:561px;top:608px;width:106px;height:24px;border:1px solid #585858;border-radius:2px;background:#ddd"></div>
<div class="b" style="left:676px;top:608px;width:106px;height:24px;border:1px solid #c6c6c6;border-radius:3px;background:#dcdcdc"></div>
<div class="ln" style="left:1px;top:649px;width:798px;height:1px"></div>
<svg style="left:780px;top:655px" width="18" height="16" viewBox="780 655 18 16"><path d="M785.3,666.6 L793.9,658.2 M791.3,666.6 L794.8,663.2" stroke="#555" stroke-width="1.1" fill="none"/></svg>
<svg style="left:0;top:0" width="40" height="36" viewBox="0 0 40 36"><path d="M22.64,17.38 L24.77,17.65 L24.77,20.55 L22.64,20.82 L22.21,21.87 L23.52,23.56 L21.46,25.62 L19.77,24.31 L18.72,24.74 L18.45,26.87 L15.55,26.87 L15.28,24.74 L14.23,24.31 L12.54,25.62 L10.48,23.56 L11.79,21.87 L11.36,20.82 L9.23,20.55 L9.23,17.65 L11.36,17.38 L11.79,16.33 L10.48,14.64 L12.54,12.58 L14.23,13.89 L15.28,13.46 L15.55,11.33 L18.45,11.33 L18.72,13.46 L19.77,13.89 L21.46,12.58 L23.52,14.64 L22.21,16.33Z M13.80,19.10 a3.20,3.20 0 1,0 6.40,0 a3.20,3.20 0 1,0 -6.40,0ZM31.16,11.46 L32.90,11.72 L32.90,13.68 L31.16,13.94 L30.70,14.73 L31.35,16.37 L29.65,17.35 L28.56,15.97 L27.64,15.97 L26.55,17.35 L24.85,16.37 L25.50,14.73 L25.04,13.94 L23.30,13.68 L23.30,11.72 L25.04,11.46 L25.50,10.67 L24.85,9.03 L26.55,8.05 L27.64,9.43 L28.56,9.43 L29.65,8.05 L31.35,9.03 L30.70,10.67Z M26.40,12.70 a1.70,1.70 0 1,0 3.40,0 a1.70,1.70 0 1,0 -3.40,0ZM31.16,24.06 L32.90,24.32 L32.90,26.28 L31.16,26.54 L30.70,27.33 L31.35,28.97 L29.65,29.95 L28.56,28.57 L27.64,28.57 L26.55,29.95 L24.85,28.97 L25.50,27.33 L25.04,26.54 L23.30,26.28 L23.30,24.32 L25.04,24.06 L25.50,23.27 L24.85,21.63 L26.55,20.65 L27.64,22.03 L28.56,22.03 L29.65,20.65 L31.35,21.63 L30.70,23.27Z M26.40,25.30 a1.70,1.70 0 1,0 3.40,0 a1.70,1.70 0 1,0 -3.40,0Z" fill="#567ba9" fill-rule="evenodd"/></svg>
<svg style="left:0;top:66px" width="110" height="78" viewBox="0 66 110 78"><path d="M63.42,99.74 L69.14,100.44 L69.14,108.16 L63.42,108.86 L62.27,111.62 L65.83,116.16 L60.36,121.63 L55.82,118.07 L53.06,119.22 L52.36,124.94 L44.64,124.94 L43.94,119.22 L41.18,118.07 L36.64,121.63 L31.17,116.16 L34.73,111.62 L33.58,108.86 L27.86,108.16 L27.86,100.44 L33.58,99.74 L34.73,96.98 L31.17,92.44 L36.64,86.97 L41.18,90.53 L43.94,89.38 L44.64,83.66 L52.36,83.66 L53.06,89.38 L55.82,90.53 L60.36,86.97 L65.83,92.44 L62.27,96.98Z M39.80,104.30 a8.70,8.70 0 1,0 17.40,0 a8.70,8.70 0 1,0 -17.40,0ZM85.48,84.22 L89.95,84.89 L89.95,89.91 L85.48,90.58 L84.30,92.63 L85.95,96.84 L81.60,99.35 L78.78,95.82 L76.42,95.82 L73.60,99.35 L69.25,96.84 L70.90,92.63 L69.72,90.58 L65.25,89.91 L65.25,84.89 L69.72,84.22 L70.90,82.17 L69.25,77.96 L73.60,75.45 L76.42,78.98 L78.78,78.98 L81.60,75.45 L85.95,77.96 L84.30,82.17Z M73.30,87.40 a4.30,4.30 0 1,0 8.60,0 a4.30,4.30 0 1,0 -8.60,0ZM85.48,118.32 L89.95,118.99 L89.95,124.01 L85.48,124.68 L84.30,126.73 L85.95,130.94 L81.60,133.45 L78.78,129.92 L76.42,129.92 L73.60,133.45 L69.25,130.94 L70.90,126.73 L69.72,124.68 L65.25,124.01 L65.25,118.99 L69.72,118.32 L70.90,116.27 L69.25,112.06 L73.60,109.55 L76.42,113.08 L78.78,113.08 L81.60,109.55 L85.95,112.06 L84.30,116.27Z M73.30,121.50 a4.30,4.30 0 1,0 8.60,0 a4.30,4.30 0 1,0 -8.60,0Z" fill="#567ba9" fill-rule="evenodd"/></svg>
<svg style="left:716px;top:9px" width="20" height="20" viewBox="716 9 20 20"><path d="M731.16,17.29 L732.77,17.56 L732.77,20.24 L731.16,20.51 L730.76,21.48 L731.70,22.81 L729.81,24.70 L728.48,23.76 L727.51,24.16 L727.24,25.77 L724.56,25.77 L724.29,24.16 L723.32,23.76 L721.99,24.70 L720.10,22.81 L721.04,21.48 L720.64,20.51 L719.03,20.24 L719.03,17.56 L720.64,17.29 L721.04,16.32 L720.10,14.99 L721.99,13.10 L723.32,14.04 L724.29,13.64 L724.56,12.03 L727.24,12.03 L727.51,13.64 L728.48,14.04 L729.81,13.10 L731.70,14.99 L730.76,16.32Z M723.60,18.90 a2.30,2.30 0 1,0 4.60,0 a2.30,2.30 0 1,0 -4.60,0Z" fill="#333" fill-rule="evenodd"/></svg>
<svg style="left:115px;top:16px" width="9" height="5" viewBox="0 0 9 5"><path d="M0,0 L9,0 L4.5,5Z" fill="#333"/></svg>
<svg style="left:689px;top:16px" width="9" height="5" viewBox="0 0 9 5"><path d="M0,0 L9,0 L4.5,5Z" fill="#333"/></svg>
<div class="b" style="left:753px;top:14px;width:10px;height:4px;background:#555"></div>
<svg style="left:782px;top:7px" width="12" height="12" viewBox="782 7 12 12"><path d="M784,9 L791.4,16.4 M791.4,9 L784,16.4" stroke="#555" stroke-width="1.9" stroke-linecap="round" fill="none"/></svg>
<svg style="left:9px;top:38px" width="28" height="26" viewBox="9 38 28 26"><path d="M23,41.4 L34,60.8 L12,60.8Z" fill="#333" stroke="#333" stroke-width="2.2" stroke-linejoin="round"/><path d="M20.9,47.2 h4.2 l-0.3,6.8 h-3.6z" fill="#f5f0ae"/><rect x="21" y="55.6" width="4" height="3.6" fill="#f5f0ae"/></svg>
<svg style="left:33px;top:612px" width="16" height="16" viewBox="33 612 16 16"><g fill="none" stroke="#2b2b2b" stroke-width="2.1"><path d="M35.52,618.76 A5.5,5.5 0 0 1 45.11,616.36"/><path d="M46.28,621.04 A5.5,5.5 0 0 1 36.69,623.44"/></g><path d="M47.8,614 L47.8,618.8 L43,618.8Z" fill="#2b2b2b"/><path d="M34,626 L34,621.2 L38.8,621.2Z" fill="#2b2b2b"/></svg>
<svg style="left:457px;top:612px" width="16" height="16" viewBox="457 612 16 16"><circle cx="464.8" cy="619.9" r="6.75" fill="#2b2b2b"/><rect x="463.8" y="615" width="2.2" height="2" fill="#fff"/><path d="M462.8,618.4 h3.2 v4.6 h1 v1.4 h-4.4 v-1.4 h1 v-3.2 h-0.8z" fill="#fff"/></svg>
<svg style="left:579px;top:611px" width="16" height="18" viewBox="579 611 16 18"><g fill="none" stroke="#2b2b2b" stroke-width="1.2"><path d="M582.3,616.4 V624.6 Q582.3,626.1 583.9,626.1 H590.1 Q591.7,626.1 591.7,624.6 V616.4"/><path d="M580.9,616.4 H593"/><path d="M584.5,616.2 V614.8 Q584.5,613.7 585.6,613.7 H588.4 Q589.5,613.7 589.5,614.8 V616.2"/></g><g stroke="#2b2b2b" stroke-width="0.9"><path d="M584.5,618.5 V623.7 M587,618.5 V623.7 M589.5,618.5 V623.7"/></g></svg>
<svg style="left:685px;top:611px" width="18" height="16" viewBox="685 611 18 16"><path d="M692.1,612.1 h3.8 v4.6 h2.7 l-4.6,4.4 l-4.6,-4.4 h2.7z" fill="#999"/><path d="M687,621.2 h3.4 l3.6,2.6 l3.6,-2.6 h2.9 q0.7,0 0.7,0.7 v3.3 q0,0.7 -0.7,0.7 h-13.5 q-0.7,0 -0.7,-0.7 v-3.3 q0,-0.7 0.7,-0.7z" fill="#999"/><rect x="697" y="623" width="0.9" height="2" fill="#ddd"/><rect x="699.1" y="623" width="0.9" height="2" fill="#ddd"/></svg>
<span class="t" style="left:51.50px;top:11px;font-size:13.5px;line-height:16px;-webkit-text-stroke:0.2px #222;transform:scaleX(0.9252)">Загрузить</span>
<span class="t" style="left:263.76px;top:11px;font-size:13.5px;line-height:16px;-webkit-text-stroke:0.2px #222;transform:scaleX(0.9433)">Настройки видеоадаптера и дисплея</span>
<span class="t" style="left:621.90px;top:11px;font-size:13.5px;line-height:16px;-webkit-text-stroke:0.2px #222;transform:scaleX(0.8948)">Сохранить</span>
<span class="t" style="left:38.73px;top:44px;font-size:13.5px;line-height:16px;-webkit-text-stroke:0.2px #222;transform:scaleX(0.8684)">Внимание!</span>
<span class="t" style="left:120.92px;top:82px;font-size:16px;line-height:20px;-webkit-text-stroke:0.5px #222;transform:scaleX(0.9789)">Настройки видеоадаптера и дисплея</span>
<span class="t" style="left:120.92px;top:105px;font-size:14px;line-height:18px;-webkit-text-stroke:0.45px #222;transform:scaleX(0.9815)">Настройка вывода изображения и установка драйвера видеокарты</span>
<span class="t" style="left:30.00px;top:149px;font-size:13.5px;line-height:16px;-webkit-text-stroke:0.2px #222;transform:scaleX(0.9172)">Основные настройки</span>
<span class="t" style="left:162.50px;top:149px;font-size:13.5px;line-height:16px;-webkit-text-stroke:0.2px #222;transform:scaleX(0.9506)">Драйвер</span>
<span class="t" style="left:224.09px;top:149px;font-size:13.5px;line-height:16px;-webkit-text-stroke:0.2px #222;transform:scaleX(0.9134)">Информация</span>
<span class="t" style="left:23.60px;top:175px;font-size:13.5px;line-height:16px;-webkit-text-stroke:0.2px #222;transform:scaleX(0.9525)">Драйвер</span>
<span class="t" style="left:38.87px;top:198px;font-size:13.5px;line-height:16px;-webkit-text-stroke:0.2px #222;transform:scaleX(0.9277)">Модули с драйверами</span>
<span class="t" style="left:179.60px;top:198px;font-size:13.5px;line-height:16px;-webkit-text-stroke:0.2px #222;transform:scaleX(0.9309)">Драйверы</span>
<span class="t" style="left:24.40px;top:223px;font-size:13.5px;line-height:16px;-webkit-text-stroke:0.2px #222;transform:scaleX(0.9408)">Установлен</span>
<span class="t" style="left:96.50px;top:223px;font-size:13.5px;line-height:16px;-webkit-text-stroke:0.2px #222;transform:scaleX(1.0020)">Пакет</span>
<span class="t" style="left:222.00px;top:223px;font-size:13.5px;line-height:16px;-webkit-text-stroke:0.2px #222;transform:scaleX(0.9412)">Драйвер</span>
<span class="t" style="left:316.00px;top:223px;font-size:13.5px;line-height:16px;-webkit-text-stroke:0.2px #222;transform:scaleX(0.8684)">Описание</span>
<span class="t" style="left:444.00px;top:223px;font-size:13.5px;line-height:16px;-webkit-text-stroke:0.2px #222;transform:scaleX(0.9351)">Устройства</span>
<span class="t" style="left:97.50px;top:248px;font-size:13.5px;line-height:16px;-webkit-text-stroke:0.2px #222;transform:scaleX(0.9887)">ubm-nvidia-340</span>
<span class="t" style="left:222.00px;top:248px;font-size:13.5px;line-height:16px;-webkit-text-stroke:0.2px #222;transform:scaleX(0.9954)">nvidia-340</span>
<span class="t" style="left:316.00px;top:240px;font-size:13.5px;line-height:16px;-webkit-text-stroke:0.2px #222;transform:scaleX(0.9425)">Драйвер видеокарт</span>
<span class="t" style="left:316.00px;top:256px;font-size:13.5px;line-height:16px;-webkit-text-stroke:0.2px #222;transform:scaleX(0.9159)">nVidia</span>
<span class="t" style="left:442.55px;top:240px;font-size:13.5px;line-height:16px;-webkit-text-stroke:0.2px #222;transform:scaleX(0.9547)">Видеокарты серии 8XXX, 9XXX, 1XX, 2XX, 3XX,</span>
<span class="t" style="left:443.50px;top:256px;font-size:13.5px;line-height:16px;-webkit-text-stroke:0.2px #222;transform:scaleX(0.9722)">4XX, 5XX, 6XX, 7XX</span>
<span class="t" style="left:97.50px;top:280px;font-size:13.5px;line-height:16px;-webkit-text-stroke:0.2px #222;transform:scaleX(0.9790)">ubm-nvidia-390</span>
<span class="t" style="left:222.00px;top:280px;font-size:13.5px;line-height:16px;-webkit-text-stroke:0.2px #222;transform:scaleX(0.9808)">nvidia-390</span>
<span class="t" style="left:316.00px;top:272px;font-size:13.5px;line-height:16px;-webkit-text-stroke:0.2px #222;transform:scaleX(0.9425)">Драйвер видеокарт</span>
<span class="t" style="left:316.00px;top:288px;font-size:13.5px;line-height:16px;-webkit-text-stroke:0.2px #222;transform:scaleX(0.9159)">nVidia</span>
<span class="t" style="left:442.54px;top:280px;font-size:13.5px;line-height:16px;-webkit-text-stroke:0.2px #222;transform:scaleX(0.9591)">Видеокарты серии 4XX, 5XX, 6XX, 7XX, 9XX, 10XX</span>
<span class="t" style="left:97.50px;top:312px;font-size:13.5px;line-height:16px;-webkit-text-stroke:0.2px #222;transform:scaleX(0.9887)">ubm-nvidia-470</span>
<span class="t" style="left:222.00px;top:312px;font-size:13.5px;line-height:16px;-webkit-text-stroke:0.2px #222;transform:scaleX(0.9954)">nvidia-470</span>
<span class="t" style="left:316.00px;top:304px;font-size:13.5px;line-height:16px;-webkit-text-stroke:0.2px #222;transform:scaleX(0.9425)">Драйвер видеокарт</span>
<span class="t" style="left:316.00px;top:320px;font-size:13.5px;line-height:16px;-webkit-text-stroke:0.2px #222;transform:scaleX(0.9159)">nVidia</span>
<span class="t" style="left:442.56px;top:312px;font-size:13.5px;line-height:16px;-webkit-text-stroke:0.2px #222;transform:scaleX(0.9425)">Видеокарты серии 6XX, 7XX, 9XX, 10XX, 16XX</span>
<span class="t" style="left:97.50px;top:344px;font-size:13.5px;line-height:16px;-webkit-text-stroke:0.2px #222;transform:scaleX(0.9498)">ubm-nvidia-510</span>
<span class="t" style="left:222.00px;top:344px;font-size:13.5px;line-height:16px;-webkit-text-stroke:0.2px #222;transform:scaleX(0.9371)">nvidia-510</span>
<span class="t" style="left:316.00px;top:336px;font-size:13.5px;line-height:16px;-webkit-text-stroke:0.2px #222;transform:scaleX(0.9425)">Драйвер видеокарт</span>
<span class="t" style="left:316.00px;top:352px;font-size:13.5px;line-height:16px;-webkit-text-stroke:0.2px #222;transform:scaleX(0.9159)">nVidia</span>
<span class="t" style="left:442.55px;top:336px;font-size:13.5px;line-height:16px;-webkit-text-stroke:0.2px #222;transform:scaleX(0.9477)">Видеокарты серии NVS, Quadro Sync, Quadro NVS,</span>
<span class="t" style="left:443.50px;top:352px;font-size:13.5px;line-height:16px;-webkit-text-stroke:0.2px #222;transform:scaleX(0.9603)">Quadro, Quadro RTX, NVIDIA RTX</span>
<span class="t" style="left:97.50px;top:376px;font-size:13.5px;line-height:16px;-webkit-text-stroke:0.2px #222;transform:scaleX(0.9498)">ubm-nvidia-515</span>
<span class="t" style="left:222.00px;top:376px;font-size:13.5px;line-height:16px;-webkit-text-stroke:0.2px #222;transform:scaleX(0.9371)">nvidia-515</span>
<span class="t" style="left:316.00px;top:368px;font-size:13.5px;line-height:16px;-webkit-text-stroke:0.2px #222;transform:scaleX(0.9425)">Драйвер видеокарт</span>
<span class="t" style="left:316.00px;top:384px;font-size:13.5px;line-height:16px;-webkit-text-stroke:0.2px #222;transform:scaleX(0.9159)">nVidia</span>
<span class="t" style="left:442.55px;top:368px;font-size:13.5px;line-height:16px;-webkit-text-stroke:0.2px #222;transform:scaleX(0.9477)">Видеокарты серии NVS, Quadro Sync, Quadro NVS,</span>
<span class="t" style="left:443.50px;top:384px;font-size:13.5px;line-height:16px;-webkit-text-stroke:0.2px #222;transform:scaleX(0.9603)">Quadro, Quadro RTX, NVIDIA RTX</span>
<span class="t" style="left:97.50px;top:408px;font-size:13.5px;line-height:16px;-webkit-text-stroke:0.2px #222;transform:scaleX(0.9581)">ubm-nvidia-optimus</span>
<span class="t" style="left:222.00px;top:408px;font-size:13.5px;line-height:16px;-webkit-text-stroke:0.2px #222;transform:scaleX(0.9371)">nvidia-optimus</span>
<span class="t" style="left:316.00px;top:400px;font-size:13.5px;line-height:16px;-webkit-text-stroke:0.2px #222;transform:scaleX(0.9170)">Драйвер гибридной</span>
<span class="t" style="left:316.00px;top:416px;font-size:13.5px;line-height:16px;-webkit-text-stroke:0.2px #222;transform:scaleX(0.9364)">графики ноутбука</span>
<span class="t" style="left:442.57px;top:408px;font-size:13.5px;line-height:16px;-webkit-text-stroke:0.2px #222;transform:scaleX(0.9348)">Нет данных</span>
<span class="t" style="left:52.40px;top:612px;font-size:13.5px;line-height:16px;-webkit-text-stroke:0.2px #222;transform:scaleX(0.8774)">Обновить</span>
<span class="t" style="left:475.58px;top:612px;font-size:13.5px;line-height:16px;-webkit-text-stroke:0.2px #222;transform:scaleX(0.9233)">Подробнее</span>
<span class="t" style="left:598.50px;top:612px;font-size:13.5px;line-height:16px;-webkit-text-stroke:0.2px #222;transform:scaleX(0.9319)">Удалить</span>
<span class="t" style="left:705.70px;top:612px;font-size:13.5px;line-height:16px;color:#999;-webkit-text-stroke:0.2px #999;transform:scaleX(0.9192)">Установить</span>
</body></html>
